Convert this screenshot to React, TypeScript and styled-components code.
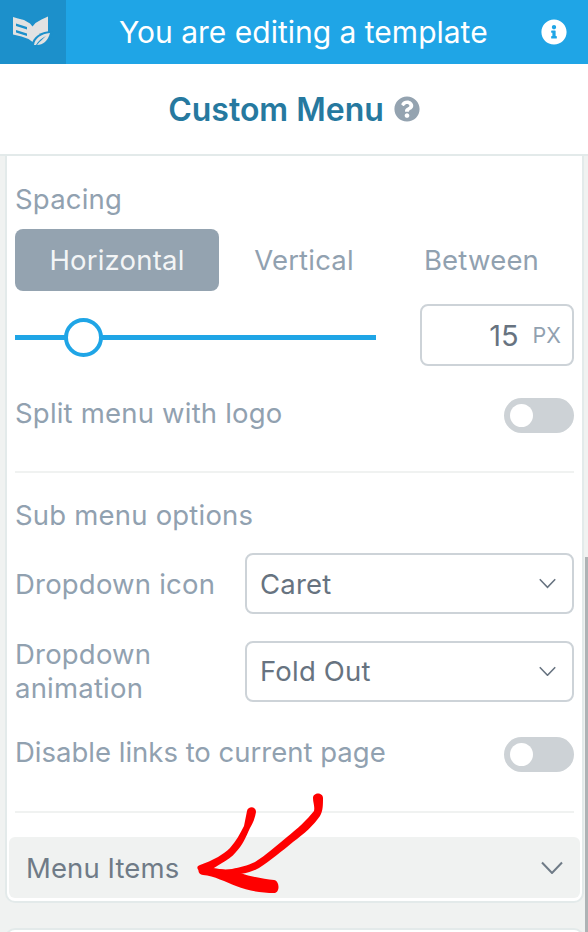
import React from "react";
import styled, { createGlobalStyle } from "styled-components";
import { FaInfoCircle, FaQuestionCircle } from "react-icons/fa";

const GlobalStyle = createGlobalStyle`
  html, body {
    margin: 0;
    padding: 0;
    height: 932px;
    overflow: hidden;
    background: #f0f2f1;
    font-family: "Inter", "Liberation Sans", sans-serif;
  }
  * { box-sizing: border-box; }
`;

const Page = styled.div`
  position: relative;
  width: 588px;
  height: 932px;
  overflow: hidden;
`;

const Header = styled.header`
  display: flex;
  align-items: center;
  height: 64px;
  background: #1fa5e6;
  color: #fff;
`;

const LogoBox = styled.div`
  display: flex;
  align-items: center;
  justify-content: center;
  width: 66px;
  height: 64px;
  background: #1c90cb;
`;

const HeaderText = styled.div`
  flex: 1;
  padding-left: 53px;
  font-size: 30px;
  white-space: nowrap;
`;

const InfoButton = styled.div`
  display: flex;
  margin-right: 21px;
  font-size: 26px;
`;

const TitleBar = styled.div`
  display: flex;
  align-items: center;
  justify-content: center;
  gap: 10px;
  height: 92px;
  background: #fff;
  border-bottom: 2px solid #e3eaea;
`;

const Title = styled.h1`
  margin: 0;
  font-size: 32px;
  font-weight: 600;
  color: #26799f;
`;

const HelpIcon = styled.span`
  display: flex;
  font-size: 26px;
  color: #94a3b0;
`;

const Panel = styled.section`
  margin: 0 4px 0 5px;
  height: 747px;
  background: #fff;
  border: solid #e3eaea;
  border-width: 0 2px 2px;
  border-radius: 0 0 10px 10px;
  padding: 0 2px;
`;

const PanelInner = styled.div`
  padding: 26px 6px 0;
`;

const Label = styled.div`
  font-size: 27.5px;
  letter-spacing: 0.2px;
  line-height: 34px;
  color: #91a1b0;
`;

const ToggleLabel = styled(Label)<{ $tight?: boolean }>`
  margin-bottom: 5px;
  letter-spacing: ${({ $tight }) => ($tight ? "0" : "0.2px")};
`;

const Tabs = styled.div`
  display: grid;
  grid-template-columns: 204px 170px 185px;
  margin-top: 13px;
`;

const Tab = styled.div<{ $active?: boolean }>`
  display: flex;
  align-items: center;
  justify-content: center;
  height: 62px;
  border-radius: 8px;
  font-size: 27.5px;
  letter-spacing: 0.2px;
  color: ${({ $active }) => ($active ? "#f3f5f6" : "#91a1b0")};
  background: ${({ $active }) => ($active ? "#94a3b0" : "transparent")};
`;

const SliderRow = styled.div`
  display: flex;
  align-items: center;
  justify-content: space-between;
  margin-top: 13px;
`;

const SliderTrack = styled.div`
  position: relative;
  width: 361px;
  height: 5px;
  margin-top: 5px;
  background: #1fa5e6;
`;

const SliderThumb = styled.div`
  position: absolute;
  left: 49px;
  top: -17px;
  width: 39px;
  height: 39px;
  border-radius: 50%;
  background: #fff;
  border: 4px solid #1fa5e6;
`;

const NumberBox = styled.div`
  display: flex;
  align-items: center;
  justify-content: flex-end;
  gap: 14px;
  width: 154px;
  height: 62px;
  padding-right: 11px;
  border: 2px solid #cdd3d8;
  border-radius: 8px;
`;

const NumberValue = styled.span`
  font-size: 29px;
  color: #677380;
`;

const NumberUnit = styled.span`
  font-size: 21.5px;
  color: #91a1b0;
`;

const ToggleRow = styled.div<{ $top: number }>`
  display: flex;
  align-items: center;
  justify-content: space-between;
  height: 35px;
  margin-top: ${({ $top }) => $top}px;
`;

const Toggle = styled.div`
  display: flex;
  align-items: center;
  width: 70px;
  height: 35px;
  padding-left: 6px;
  border-radius: 18px;
  background: #cdd2d6;
`;

const ToggleKnob = styled.div`
  width: 23px;
  height: 23px;
  border-radius: 50%;
  background: #fff;
`;

const Divider = styled.div<{ $top: number }>`
  height: 2px;
  margin-top: ${({ $top }) => $top}px;
  background: #f0f2f1;
`;

const SectionLabel = styled(Label)`
  margin-top: 25px;
`;

const SelectRow = styled.div<{ $top: number }>`
  display: grid;
  grid-template-columns: 230px 329px;
  align-items: center;
  margin-top: ${({ $top }) => $top}px;
`;

const Select = styled.div`
  display: flex;
  align-items: center;
  justify-content: space-between;
  height: 61px;
  padding: 0 16px 0 13px;
  border: 2px solid #cdd3d8;
  border-radius: 8px;
  font-size: 27.5px;
  letter-spacing: 0.2px;
  color: #677380;
`;

const Accordion = styled.div`
  display: flex;
  align-items: center;
  justify-content: space-between;
  height: 61px;
  margin-top: 24px;
  padding: 0 17px;
  border-radius: 6px;
  background: #f0f2f1;
  font-size: 27.5px;
  letter-spacing: 0.1px;
  color: #6f7b87;
`;

const NextPanel = styled.div`
  height: 10px;
  margin: 25px 4px 0 5px;
  background: #fff;
  border: solid #e3eaea;
  border-width: 2px 2px 0;
  border-radius: 10px 10px 0 0;
`;

const ScrollThumb = styled.div`
  position: absolute;
  right: 0;
  top: 557px;
  width: 3px;
  height: 375px;
  background: #aeb3b5;
`;

const Annotation = styled.svg`
  position: absolute;
  left: 0;
  top: 0;
  pointer-events: none;
`;

const BookLogo = () => (
  <svg width="40" height="32" viewBox="0 0 40 32">
    <path
      fill="#e2e2e2"
      d="M0 1l5 1.500 6 1.500 6 3.500 2.500 3 3-3.500 6-3.500 6.500-3v17l-6 1.500-5 3.500-3 4.500-5.500-4-7-2.500-8.500-2z"
    />
    <path
      fill="#1c90cb"
      d="M3 7.500l11 3.500 0 2.500-11-3.500zM3 14l11 3.500 0 2.500-11-3.500z"
    />
    <path fill="#1c90cb" d="M18 30c2-9 9-15 22-15-2 11-9 16-18 16z" />
    <path
      fill="#e2e2e2"
      d="M21 29c1-7 7-11 16-12-2 8-7 12-13 12 3-4 6-6 9-9-4 2-8 5-10 9z"
    />
  </svg>
);

const Chevron = ({ size, color }: { size: number; color: string }) => (
  <svg width={size} height={size * 0.62} viewBox="0 0 22 13.600">
    <path
      d="M1 1.500l10 10.500 10-10.500"
      fill="none"
      stroke={color}
      strokeWidth="2"
    />
  </svg>
);

export default function App() {
  return (
    <Page>
      <GlobalStyle />
      <Header>
        <LogoBox>
          <BookLogo />
        </LogoBox>
        <HeaderText>You are editing a template</HeaderText>
        <InfoButton>
          <FaInfoCircle />
        </InfoButton>
      </Header>
      <TitleBar>
        <Title>Custom Menu</Title>
        <HelpIcon>
          <FaQuestionCircle />
        </HelpIcon>
      </TitleBar>
      <Panel>
        <PanelInner>
          <Label>Spacing</Label>
          <Tabs>
            <Tab $active>Horizontal</Tab>
            <Tab>Vertical</Tab>
            <Tab>Between</Tab>
          </Tabs>
          <SliderRow>
            <SliderTrack>
              <SliderThumb />
            </SliderTrack>
            <NumberBox>
              <NumberValue>15</NumberValue>
              <NumberUnit>PX</NumberUnit>
            </NumberBox>
          </SliderRow>
          <ToggleRow $top={32}>
            <ToggleLabel>Split menu with logo</ToggleLabel>
            <Toggle>
              <ToggleKnob />
            </Toggle>
          </ToggleRow>
          <Divider $top={38} />
          <SectionLabel>Sub menu options</SectionLabel>
          <SelectRow $top={21}>
            <Label>Dropdown icon</Label>
            <Select>
              Caret
              <Chevron size={17} color="#677380" />
            </Select>
          </SelectRow>
          <SelectRow $top={23}>
            <Label>
              Dropdown
              <br />
              animation
            </Label>
            <Select>
              Fold Out
              <Chevron size={17} color="#677380" />
            </Select>
          </SelectRow>
          <ToggleRow $top={32}>
            <ToggleLabel $tight>Disable links to current page</ToggleLabel>
            <Toggle>
              <ToggleKnob />
            </Toggle>
          </ToggleRow>
          <Divider $top={39} />
        </PanelInner>
        <Accordion>
          Menu Items
          <Chevron size={22} color="#6f7b87" />
        </Accordion>
      </Panel>
      <NextPanel />
      <ScrollThumb />
      <Annotation width="588" height="932" viewBox="0 0 588 932">
        <g fill="#fe0000">
          <path d="M247 811C248 806 256 806 256 812C255 818 253 823 250 828C246 837 242 846 236 852C232 857 227 860 222 863C216 867 210 870 205 873L200 872C196 868 197 866 200 865C206 863 212 860 218 857C222 854 226 852 230 848C236 841 240 834 244 826C245 821 246 816 247 811Z" />
          <path d="M313 798C313 792 323 792 323 798C323 805 323 811 320 816C314 825 304 834 293 842C282 851 270 861 259 868C250 873 240 875 222 875L205 874L205 867C215 869 224 870 232 869C240 867 247 866 255 862C266 855 276 846 287 837C297 829 307 820 314 811C315 806 313 803 313 798Z" />
          <path d="M203 867C215 868 228 870 240 873C252 877 264 879 274 880C280 881 280 893 274 893C262 893 248 891 236 886C226 882 214 876 203 875C197 874 197 868 203 867Z" />
        </g>
      </Annotation>
    </Page>
  );
}
